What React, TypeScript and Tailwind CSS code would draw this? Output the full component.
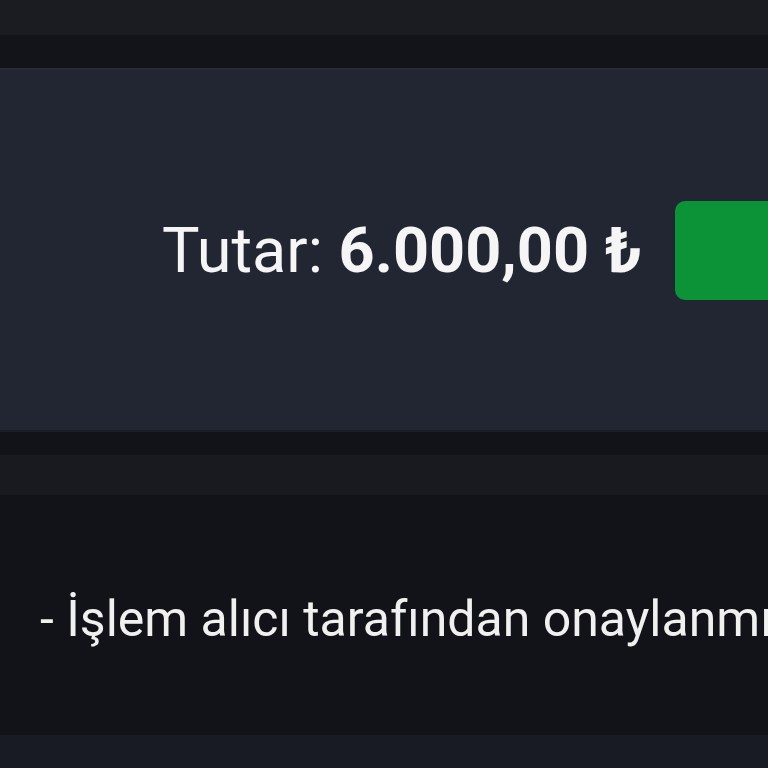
import React from "react";

export default function App() {
  return (
    <div className="w-[768px] h-[768px] overflow-hidden bg-[#121318] flex flex-col" style={{ fontFamily: "Roboto, 'Noto Sans', sans-serif" }}>
      <div className="h-[35px] shrink-0 bg-[#1a1c21]" />
      <div className="h-[33px] shrink-0 bg-[#121419]" />
      <div className="h-[2px] shrink-0 bg-[#282c37]" />
      <div className="h-[360px] shrink-0 bg-[#222632] flex items-center pl-[162px] gap-[33px] overflow-hidden">
        <div className="whitespace-nowrap text-[63px] leading-none text-[#f5f5f5] shrink-0">
          Tutar: <span className="font-bold">6.000,00 ₺</span>
        </div>
        <div className="shrink-0 w-[200px] h-[99px] rounded-[10px] bg-[#0c9237]" />
      </div>
      <div className="h-[2px] shrink-0 bg-[#1c1e26]" />
      <div className="h-[23px] shrink-0 bg-[#121318]" />
      <div className="h-[40px] shrink-0 bg-[#191a1f]" />
      <div className="h-[240px] shrink-0 bg-[#121318] flex items-center pl-[40px] pt-[8px] overflow-hidden">
        <div className="whitespace-nowrap text-[50px] leading-none text-[#f0f0f0]">
          - İşlem alıcı tarafından onaylanmıştır.
        </div>
      </div>
      <div className="flex-1 bg-[#181b24]" />
    </div>
  );
}
